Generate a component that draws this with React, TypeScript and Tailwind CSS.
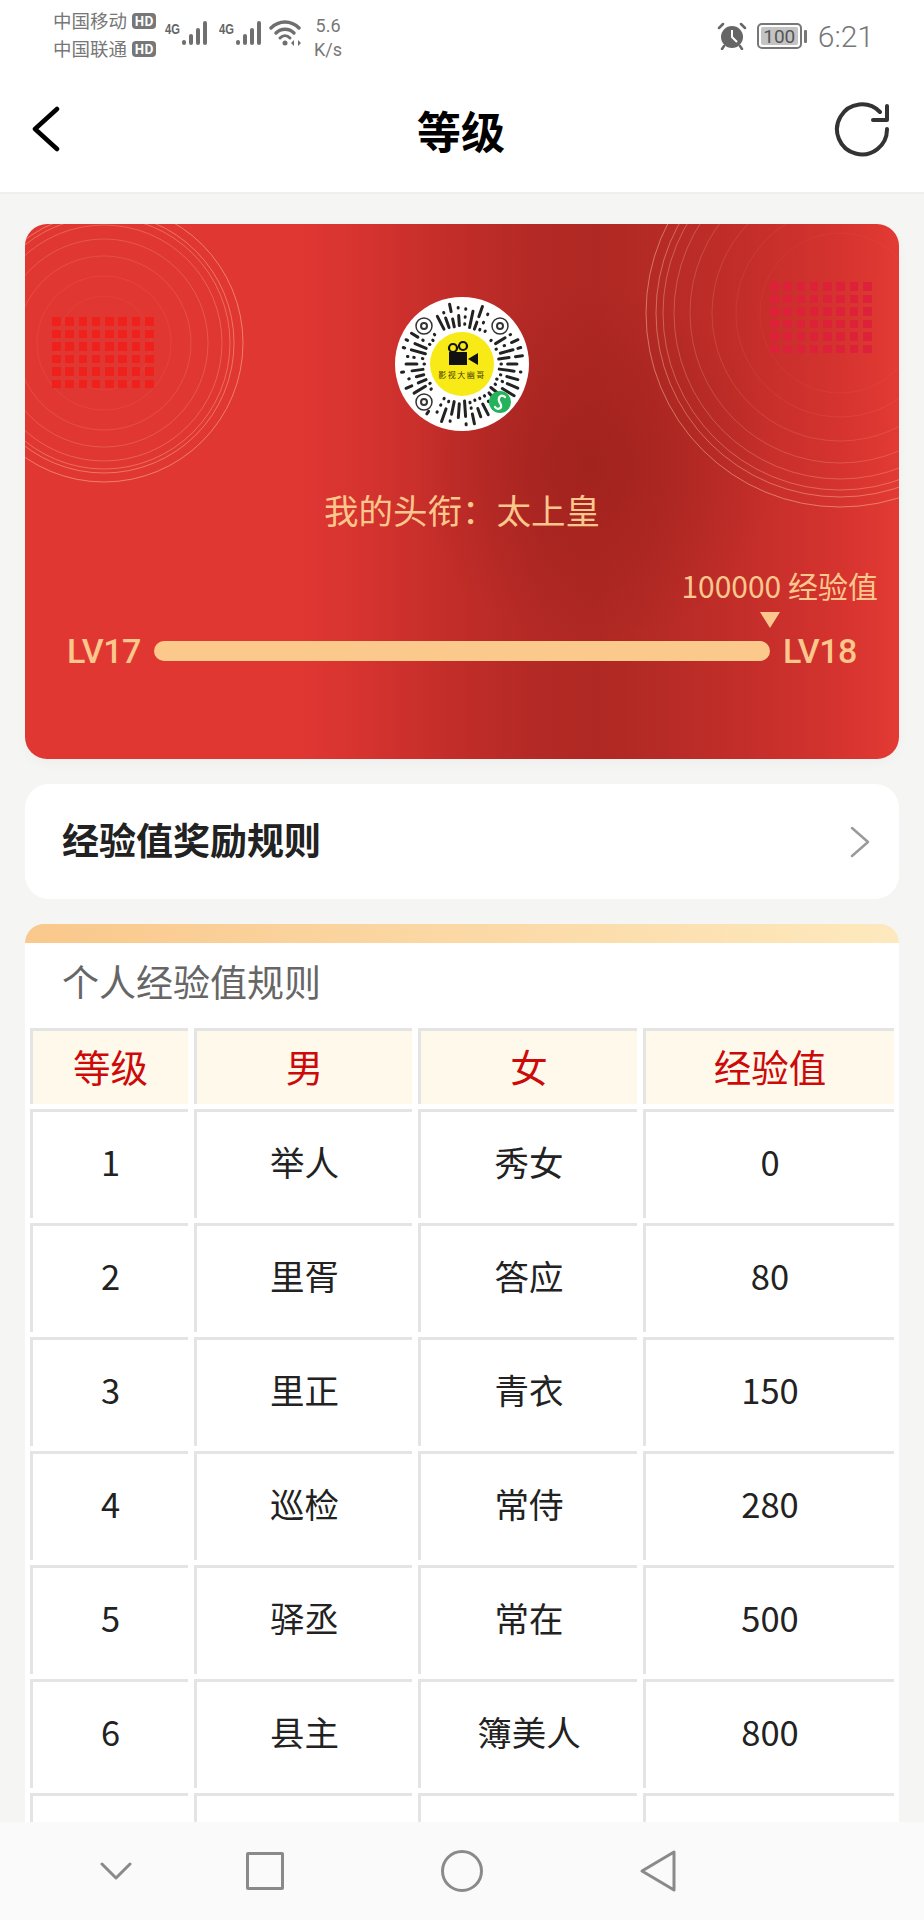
import React from 'react';

const FONT = { fontFamily: '"Noto Sans CJK SC", "Noto Sans", sans-serif' };

const RANKS = [
    ['1', '举人', '秀女', '0'],
    ['2', '里胥', '答应', '80'],
    ['3', '里正', '青衣', '150'],
    ['4', '巡检', '常侍', '280'],
    ['5', '驿丞', '常在', '500'],
    ['6', '县主', '簿美人', '800'],
    ['', '', '', ''],
];

const HdBadge = () => (
    <span className="ml-[5px] flex h-[16px] w-[24px] items-center justify-center rounded-[4px] bg-[#777] text-[13px] font-bold leading-none text-white">
        HD
    </span>
);

const Signal = () => (
    <div className="flex items-start">
        <span className="mt-[2px] w-[16px] origin-left scale-x-[0.8] text-[14px] font-bold leading-[13px] text-[#666] [font-family:'Liberation_Sans']">4G</span>
        <svg width="28" height="26" viewBox="0 0 28 26" className="mt-[-1px]" fill="#6f6f6f">
            <rect x="1" y="20" width="4" height="5" rx="2" />
            <rect x="8" y="14" width="4" height="11" rx="2" />
            <rect x="15" y="8" width="4" height="17" rx="2" />
            <rect x="22" y="1" width="4" height="24" rx="2" />
        </svg>
    </div>
);

const StatusBar = () => (
    <div className="flex h-[64px] items-start pl-[53px] pt-[10px] text-[#777]">
        <div className="flex w-[112px] flex-col gap-[7px] text-[18.5px] leading-[21px]">
            <div className="flex items-center">中国移动<HdBadge /></div>
            <div className="flex items-center">中国联通<HdBadge /></div>
        </div>
        <div className="mt-[11px] flex gap-[10px]">
            <Signal />
            <Signal />
        </div>
        <svg width="34" height="28" viewBox="0 0 34 28" className="ml-[6px] mt-[10px]" fill="none" stroke="#6f6f6f" strokeLinecap="round">
            <path d="M2 8 C10 0 22 0 30 8" strokeWidth="3.4" />
            <path d="M7 13 C12 8 20 8 25 13" strokeWidth="3.4" />
            <path d="M11 18 C14 15 18 15 21 18" strokeWidth="3" />
            <circle cx="16" cy="23" r="2.5" fill="#6f6f6f" stroke="none" />
            <path d="M25 20 L22 23 L25 26 Z M29 20 L32 23 L29 26 Z" fill="#6f6f6f" stroke="none" />
        </svg>
        <div className="ml-[11px] mt-[4px] flex flex-col items-center text-[18px] leading-[24px] [font-family:'Roboto']">
            <span>5.6</span>
            <span>K/s</span>
        </div>
        <div className="ml-auto mr-[50px] mt-[10px] flex items-center">
            <svg width="30" height="28" viewBox="0 0 30 28">
                <circle cx="15" cy="15" r="11" fill="#666" />
                <path d="M15 8 V15 L20 20" stroke="#fff" strokeWidth="2" fill="none" />
                <path d="M2 6 L6 2 M28 6 L24 2 M7 24 L5 27 M23 24 L25 27" stroke="#666" strokeWidth="2.5" strokeLinecap="round" />
            </svg>
            <div className="relative ml-[10px] flex h-[26px] w-[45px] items-center justify-center rounded-[5px] border-2 border-[#777] bg-white text-[19px] leading-none text-[#555] [font-family:'Roboto']">
                <span className="absolute inset-[2px] rounded-[2px] bg-[#c4c4c4]" />
                <span className="relative">100</span>
            </div>
            <span className="ml-[2px] h-[13px] w-[3px] rounded-[1px] bg-[#777]" />
            <span className="ml-[11px] mt-[2px] text-[30px] font-light leading-none text-[#777] [font-family:'Roboto']">6:21</span>
        </div>
    </div>
);

const TitleBar = () => (
    <div className="flex h-[130px] items-center border-b-2 border-[#efefed] bg-white pl-[32px] pr-[34px] pt-[1px]">
        <div className="flex flex-1">
            <svg width="28" height="46" viewBox="0 0 28 46" fill="none" stroke="#000" strokeWidth="4.5" strokeLinecap="round" strokeLinejoin="round">
                <path d="M25 3 L3 23 L25 43" />
            </svg>
        </div>
        <h1 className="mt-[3px] text-[44px] font-bold leading-none text-black">等级</h1>
        <div className="flex flex-1 justify-end">
            <svg width="56" height="56" viewBox="0 0 56 56" fill="none" stroke="#333" strokeWidth="4" strokeLinecap="round">
                <path d="M53 28 A25 25 0 1 1 46 11" />
                <path d="M53 5 V19 H39" strokeLinejoin="round" />
            </svg>
        </div>
    </div>
);

// Seeded so that the code looks the same on every render
const spokes = () => {
    const out: React.ReactNode[] = [];
    let seed = 11;
    const rnd = () => {
        seed = (seed * 9301 + 49297) % 233280;
        return seed / 233280;
    };
    for (let i = 0; i < 46; i++) {
        const a = (i / 46) * Math.PI * 2;
        const c = Math.cos(a);
        const s = Math.sin(a);
        let r = 37 + rnd() * 3;
        while (r < 60) {
            const len = rnd() < 0.5 ? 7 + rnd() * 10 : 0.5;
            const end = Math.min(r + len, 61);
            const nearFinder = [[-38, -38], [38, -38], [-38, 38]].some(([fx, fy]) => Math.hypot(c * (r + len / 2) - fx, s * (r + len / 2) - fy) < 13);
            if (!nearFinder) {
                out.push(<line key={`${i}-${r}`} x1={67 + c * r} y1={67 + s * r} x2={67 + c * end} y2={67 + s * end} />);
            }
            r = end + 5 + rnd() * 4;
        }
    }
    return out;
};

const Finder = ({ x, y }: { x: number; y: number }) => (
    <g fill="none" stroke="#333">
        <circle cx={x} cy={y} r="8" strokeWidth="1.5" />
        <circle cx={x} cy={y} r="3" strokeWidth="2" />
    </g>
);

const MiniCode = () => (
    <div className="relative h-[134px] w-[134px]">
        <svg width="134" height="134" viewBox="0 0 134 134">
            <circle cx="67" cy="67" r="67" fill="#fff" />
            <g stroke="#222" strokeWidth="3" strokeLinecap="round">{spokes()}</g>
            <Finder x={29} y={29} />
            <Finder x={105} y={29} />
            <Finder x={29} y={105} />
            <circle cx="67" cy="67" r="32" fill="#f8ea17" />
            <rect x="54" y="55" width="18" height="13" fill="#111" />
            <path d="M73 62 L83 56 V68 Z" fill="#111" />
            <circle cx="58" cy="51" r="4" fill="none" stroke="#111" strokeWidth="2.2" />
            <circle cx="68" cy="49" r="4" fill="none" stroke="#111" strokeWidth="2.2" />
            <circle cx="105" cy="105" r="11" fill="#23b35b" />
            <path d="M110 100 C106 97 103 100 104 104 L106 108 C107 112 102 113 100 110" fill="none" stroke="#fff" strokeWidth="2.2" strokeLinecap="round" />
        </svg>
        <span className="absolute left-0 right-0 top-[72px] text-center text-[8px] leading-[12px] tracking-[1.5px] text-[#4a4200]">影视大幽哥</span>
    </div>
);

const Rings = ({ radii, color }: { radii: number[]; color: string }) => {
    const size = radii[0] * 2 + 2;
    const c = size / 2;
    return (
        <svg width={size} height={size} fill="none" stroke={color}>
            {radii.map((r, i) => (
                <circle key={r} cx={c} cy={c} r={r} strokeOpacity={Math.max(0.05, 0.44 - i * 0.06)} strokeWidth="1" />
            ))}
        </svg>
    );
};

const DotGrid = ({ className }: { className: string }) => (
    <div className="grid grid-cols-[repeat(8,8.5px)] gap-x-[4.8px] gap-y-[4px]">
        {Array.from({ length: 48 }).map((_, i) => (
            <span key={i} className={`h-[8.5px] w-[8.5px] ${className}`} />
        ))}
    </div>
);

const LevelCard = () => (
    <section className="relative h-[535px] overflow-hidden rounded-[22px] bg-[radial-gradient(circle_at_65%_45%,rgba(150,30,25,0.55),rgba(150,30,25,0)_180px),linear-gradient(90deg,#e13733_31%,#d5332f_39%,#c22d29_49%,#b32925_59%,#b02823_65%,#b42a25_71%,#c42e2a_83%,#d5332f_93%,#e33a34_100%)] shadow-[0_4px_12px_rgba(0,0,0,0.03)]">
        <div className="absolute left-[-61px] top-[-21px]">
            <Rings radii={[139, 130, 126, 118, 104, 87, 67, 47]} color="#ffd9b0" />
        </div>
        <div className="absolute left-[620px] top-[-106px]">
            <Rings radii={[194, 184, 177, 166, 150, 128, 104, 80]} color="#ffd9b0" />
        </div>
        <div className="absolute left-[27px] top-[93px]">
            <DotGrid className="bg-[#ee211d]" />
        </div>
        <div className="absolute left-[745px] top-[58px]">
            <DotGrid className="bg-[#dc2138]" />
        </div>

        <div className="relative flex flex-col">
            <div className="ml-[370px] mt-[73px]">
                <MiniCode />
            </div>
            <p className="mt-[54px] text-center text-[34.5px] leading-[48px] text-[#fbc78c]">我的头衔：太上皇</p>
            <p className="mr-[21px] mt-[32px] text-right text-[30px] leading-[40px] text-[#fbc78c]">100000 经验值</p>
            <svg width="20" height="16" viewBox="0 0 20 16" className="ml-[735px] mt-[7px]">
                <path d="M0 0 H20 L10 16 Z" fill="#fbc78c" />
            </svg>
            <div className="flex h-[46px] items-center pl-[42px] text-[34px] font-medium leading-none tracking-[-0.5px] text-[#fbc78c] [font-family:'Roboto']">
                <span className="w-[74px]">LV17</span>
                <span className="ml-[13px] h-[20px] w-[616px] rounded-full bg-[#fbc98b]" />
                <span className="ml-[13px]">LV18</span>
            </div>
        </div>
    </section>
);

const Cell = ({ children, head }: { children?: React.ReactNode; head?: boolean }) => (
    <div className={`flex items-center justify-center border-l-[3px] border-t-[3px] border-[#e4e4e4] ${head ? 'h-[76px] bg-[#fff9ec] pb-[3px] text-[37.5px] text-[#cc0a0a]' : 'h-[109px] bg-white pb-[6px] text-[34.5px] text-[#222]'}`}>
        {children}
    </div>
);

const RulesTable = () => (
    <section className="mt-[25px] rounded-t-[22px] bg-white">
        <div className="h-[19px] rounded-t-[22px] bg-[linear-gradient(90deg,#f9c88c,#fde9be)]" />
        <h2 className="flex h-[85px] items-center pb-[8px] pl-[37px] text-[37px] text-[#666]">个人经验值规则</h2>
        <div className="grid grid-cols-[158px_218px_219px_251px] gap-x-[6px] gap-y-[5px] pl-[5px]">
            {['等级', '男', '女', '经验值'].map(h => (
                <Cell key={h} head>{h}</Cell>
            ))}
            {RANKS.flat().map((v, i) => (
                <Cell key={i}>{v}</Cell>
            ))}
        </div>
    </section>
);

const NavBar = () => (
    <div className="flex h-[98px] shrink-0 items-center bg-[#fafafa] pl-[100px]">
        <svg width="32" height="18" viewBox="0 0 32 18" fill="none" stroke="#8a8a8a" strokeWidth="3" strokeLinecap="round" strokeLinejoin="round">
            <path d="M2 2 L16 16 L30 2" />
        </svg>
        <span className="ml-[114px] h-[38px] w-[38px] rounded-[2px] border-[3px] border-[#8a8a8a]" />
        <span className="ml-[157px] h-[42px] w-[42px] rounded-full border-[3px] border-[#8a8a8a]" />
        <svg width="38" height="44" viewBox="0 0 38 44" className="ml-[156px]" fill="none" stroke="#8a8a8a" strokeWidth="3" strokeLinejoin="round">
            <path d="M35 3 V41 L3 22 Z" />
        </svg>
    </div>
);

const App: React.FC = () => {
    return (
        <div className="flex h-[1920px] w-[924px] flex-col overflow-hidden bg-[#f5f5f3]" style={FONT}>
            <div className="bg-white">
                <StatusBar />
                <TitleBar />
            </div>
            <main className="min-h-0 flex-1 overflow-hidden px-[25px] pt-[30px]">
                <LevelCard />
                <div className="mt-[25px] flex h-[115px] items-center justify-between rounded-[24px] bg-white pl-[37px] pr-[29px]">
                    <span className="pb-[4px] text-[37px] font-bold leading-none text-[#222]">经验值奖励规则</span>
                    <svg width="20" height="32" viewBox="0 0 20 32" fill="none" stroke="#9a9a9a" strokeWidth="2.5" strokeLinecap="round" strokeLinejoin="round">
                        <path d="M2 2 L18 16 L2 30" />
                    </svg>
                </div>
                <RulesTable />
            </main>
            <NavBar />
        </div>
    );
};

export default App;
